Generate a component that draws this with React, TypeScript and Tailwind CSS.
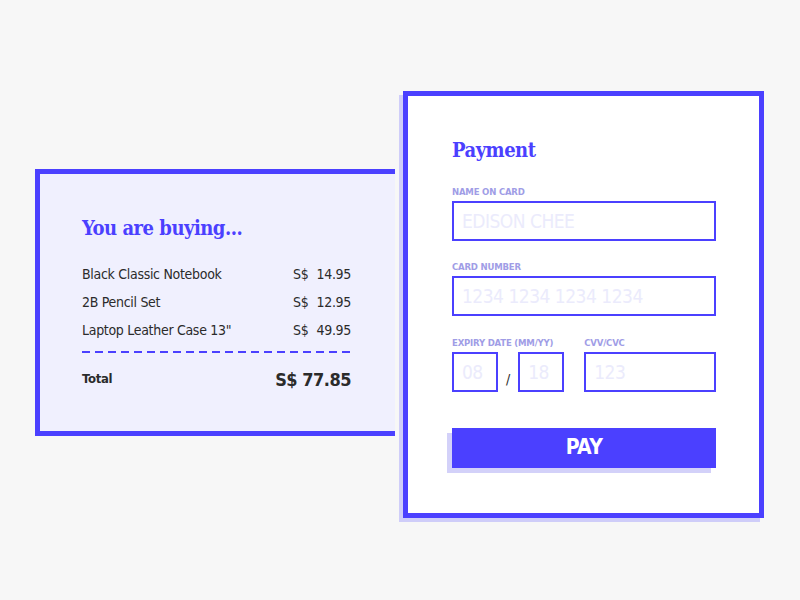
const sans = "font-['Liberation_Sans_Narrow','DejaVu_Sans_Condensed',Roboto,sans-serif]";
const slab = "font-['DejaVu_Serif_Condensed','DejaVu_Serif',serif]";

const items = [
  { name: 'Black Classic Notebook', price: '14.95' },
  { name: '2B Pencil Set', price: '12.95' },
  { name: 'Laptop Leather Case 13"', price: '49.95' }
];

const inputClass =
  'h-[40px] border-2 border-[#4b40ff] bg-white px-[8px] text-[19px] tracking-[-0.5px] text-[#333] outline-none placeholder:text-[#ebebfc]';

function Label({ children }: { children: string }) {
  return <div className="text-[9.5px] font-bold leading-[12px] tracking-[-0.2px] text-[#a09de6]">{children}</div>;
}

function Field({ label, placeholder, className = '' }: { label: string; placeholder: string; className?: string }) {
  return (
    <div className={className}>
      <Label>{label}</Label>
      <input className={`mt-[3px] w-full ${inputClass}`} placeholder={placeholder} type="text" />
    </div>
  );
}

export default function App() {
  return (
    <div className={`flex h-[600px] w-[800px] items-start bg-[#f7f7f7] ${sans}`}>
      <section className="mt-[169px] ml-[35px] h-[267px] w-[360px] border-y-[5px] border-l-[5px] border-[#4b40ff] bg-[#f0f0fe] pt-[40px] pr-[44px] pl-[42px]">
        <h2 className={`h-[28px] text-[20px] font-bold leading-[28px] tracking-[-0.5px] text-[#4b40ff] ${slab}`}>You are buying...</h2>
        <div className="mt-[18px]">
          {items.map((item) => (
            <div className="flex h-[28px] items-center text-[14px] tracking-[-0.3px] text-[#2b2b2b]" key={item.name}>
              <span className="flex-1">{item.name}</span>
              <span className="w-[20px]">S$</span>
              <span className="w-[38px] text-right">{item.price}</span>
            </div>
          ))}
        </div>
        <div className="mt-[7px] h-[2px] bg-[repeating-linear-gradient(90deg,#4b40ff_0_8px,transparent_8px_13px)]" />
        <div className="mt-[12px] flex h-[28px] items-center justify-between text-[#2b2b2b]">
          <span className="text-[13px] font-bold tracking-[-0.3px]">Total</span>
          <span className="text-[18px] font-bold tracking-[-0.5px]">S$ 77.85</span>
        </div>
      </section>

      <section className="mt-[91px] ml-[8px] h-[427px] w-[361px] border-[5px] border-[#4b40ff] bg-white pt-[40px] pl-[44px] pr-[43px] shadow-[-4px_4px_0_#cfcdf9]">
        <h2 className={`h-[28px] text-[20px] font-bold leading-[28px] tracking-[-0.5px] text-[#4b40ff] ${slab}`}>Payment</h2>
        <Field className="mt-[22px]" label="NAME ON CARD" placeholder="EDISON CHEE" />
        <Field className="mt-[20px]" label="CARD NUMBER" placeholder="1234 1234 1234 1234" />
        <div className="mt-[21px] flex">
          <div>
            <Label>EXPIRY DATE (MM/YY)</Label>
            <div className="mt-[3px] flex items-end">
              <input className={`w-[46px] ${inputClass}`} placeholder="08" type="text" />
              <span className="mx-[8px] mb-[2px] text-[14px] text-[#2b2b2b]">/</span>
              <input className={`w-[46px] ${inputClass}`} placeholder="18" type="text" />
            </div>
          </div>
          <Field className="ml-[20px] flex-1" label="CVV/CVC" placeholder="123" />
        </div>
        <button
          className="mt-[36px] h-[40px] w-full bg-[#4b40ff] text-[21px] font-bold tracking-[-0.5px] text-white shadow-[-5px_5px_0_#d3d1f9]"
          type="button"
        >
          PAY
        </button>
      </section>
    </div>
  );
}
